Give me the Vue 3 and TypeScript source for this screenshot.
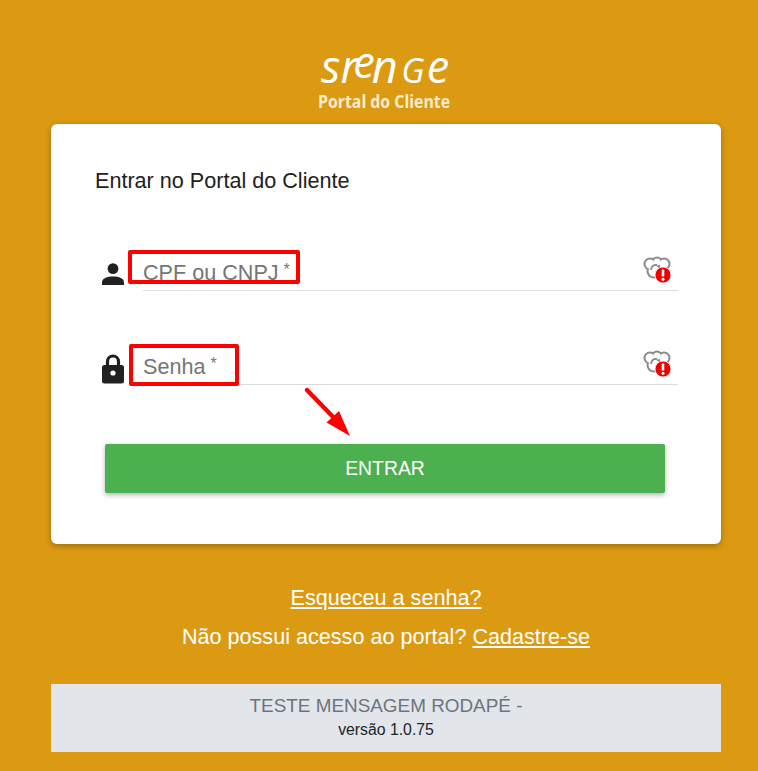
<template>
  <div class="page">
    <div class="logo">
      <svg class="logo-word" viewBox="0 0 140 38" role="img" aria-label="Sienge">
        <g fill="#fff" font-family="'Open Sans', sans-serif" font-style="italic" font-weight="400">
          <text x="5" y="29" font-size="46" transform="scale(0.98 1)">s</text>
          <text x="25" y="29" font-size="46" transform="scale(0.98 1)">r</text>
          <text x="38" y="24" font-size="44" transform="scale(0.98 1)">e</text>
          <text x="57" y="29" font-size="46" transform="scale(0.98 1)">n</text>
          <text x="87" y="29" font-size="35" transform="scale(0.98 1)">G</text>
          <text x="113" y="29" font-size="46" transform="scale(0.98 1)">e</text>
        </g>
      </svg>
      <div class="logo-sub">Portal do Cliente</div>
    </div>

    <div class="card">
      <h1 class="title">Entrar no Portal do Cliente</h1>

      <div v-for="field in fields" :key="field.label" class="field" :class="field.key">
        <svg v-if="field.key === 'user'" class="field-icon" viewBox="0 0 24 24" aria-hidden="true">
          <circle cx="12" cy="6.600" r="5.400" fill="#212121" />
          <path d="M1 23v-2.600C1 16.600 6 14.600 12 14.600s11 2 11 5.800V23z" fill="#212121" />
        </svg>
        <svg v-else class="field-icon" viewBox="0 0 24 30" aria-hidden="true">
          <path d="M6.500 13V7.500a5.500 5.500 0 0 1 11 0V13" fill="none" stroke="#212121" stroke-width="3.200" />
          <rect x="1" y="11" width="22" height="18.500" rx="2.500" fill="#212121" />
          <circle cx="12" cy="19" r="2.600" fill="#fff" />
        </svg>

        <div class="input-line">
          <span class="placeholder">{{ field.label }}</span><span class="req">*</span>
          <svg class="status" viewBox="0 0 30 28" aria-hidden="true">
            <g fill="#8a8a8a">
              <circle cx="7" cy="8" r="6.500" />
              <circle cx="14" cy="6" r="5.500" />
              <circle cx="21" cy="8" r="6.500" />
              <circle cx="11" cy="15" r="7.500" />
            </g>
            <g fill="#fff">
              <circle cx="7" cy="8" r="4.500" />
              <circle cx="14" cy="6" r="3.500" />
              <circle cx="21" cy="8" r="4.500" />
              <circle cx="11" cy="15" r="5.500" />
            </g>
            <path d="M8 14a5 5 0 0 1 6-5" fill="none" stroke="#8a8a8a" stroke-width="1.800" />
            <circle cx="20" cy="19" r="8" fill="#ee0000" stroke="#fff" stroke-width="0.800" />
            <rect x="18.700" y="13.500" width="2.600" height="7" rx="0.600" fill="#fff" />
            <circle cx="20" cy="23.200" r="1.500" fill="#fff" />
          </svg>
        </div>
        <div class="mark"></div>
      </div>

      <div class="action">
        <svg class="arrow" viewBox="0 0 50 52" aria-hidden="true">
          <path d="M3 3 L32 33" stroke="#f00" stroke-width="4.400" stroke-linecap="round" fill="none" />
          <path d="M22.500 35.500 L35 24 L46 49z" fill="#f00" />
        </svg>
        <button class="enter" type="button">ENTRAR</button>
      </div>
    </div>

    <div class="links">
      <a class="link" href="#">Esqueceu a senha?</a>
      <p class="signup">Não possui acesso ao portal? <a class="link" href="#">Cadastre-se</a></p>
    </div>

    <footer class="foot">
      <div class="foot-msg">TESTE MENSAGEM RODAPÉ -</div>
      <div class="foot-ver">versão 1.0.75</div>
    </footer>
  </div>
</template>

<script setup lang="ts">
interface Field {
  key: string;
  label: string;
}

const fields: Field[] = [
  { key: 'user', label: 'CPF ou CNPJ' },
  { key: 'lock', label: 'Senha' },
];
</script>

<style scoped>
.page {
  box-sizing: border-box;
  height: 771px;
  overflow: hidden;
  background: #dc9a13;
  padding: 54px 37px 0 51px;
  font-family: "Liberation Sans", Arial, sans-serif;
}

.logo {
  height: 70px;
  display: flex;
  flex-direction: column;
  align-items: center;
  color: #fff;
}

.logo-word {
  display: block;
  width: 140px;
  height: 38px;
  overflow: visible;
}

.logo-sub {
  margin-top: -1px;
  margin-left: -4px;
  font-family: "Open Sans", sans-serif;
  font-weight: 700;
  font-size: 18px;
  line-height: 20px;
  color: #fbeccd;
  transform: scaleX(0.88);
  white-space: nowrap;
}

.card {
  box-sizing: border-box;
  height: 420px;
  background: #fff;
  border-radius: 6px;
  box-shadow: 0 2px 6px rgba(0, 0, 0, 0.3);
  padding: 44px 43px 0 44px;
}

.title {
  margin: 0 0 47px;
  font-size: 21.6px;
  line-height: 25px;
  font-weight: 400;
  color: #212121;
}

.field {
  position: relative;
  display: flex;
  align-items: flex-end;
  gap: 18px;
  height: 51px;
  margin-bottom: 43px;
  padding-left: 6px;
}

.field-icon {
  flex: none;
  width: 24px;
  height: 24px;
  margin-bottom: 5px;
}

.lock .field-icon {
  height: 30px;
  margin-bottom: 1px;
}

.input-line {
  position: relative;
  flex: 1;
  height: 35px;
  border-bottom: 1px solid #ddd;
  font-size: 21.6px;
  line-height: 35px;
  color: #757575;
}

.lock .input-line {
  margin-left: -1px;
}

.lock .placeholder {
  margin-left: 1px;
}

.req {
  position: relative;
  top: -5px;
  margin-left: 5px;
  font-size: 16px;
}

.status {
  position: absolute;
  right: 5px;
  top: 1px;
  width: 30px;
  height: 28px;
}

.mark {
  position: absolute;
  border: 4px solid #f00;
  border-radius: 2px;
  box-sizing: border-box;
}

.user .mark {
  left: 33px;
  top: 10px;
  width: 172px;
  height: 34px;
}

.lock .mark {
  left: 34px;
  top: 10px;
  width: 110px;
  height: 42px;
}

.action {
  position: relative;
  padding: 0 13px 0 10px;
  margin-top: 59px;
}

.arrow {
  position: absolute;
  left: 209px;
  top: -57px;
  width: 50px;
  height: 52px;
}

.enter {
  display: block;
  width: 100%;
  height: 49px;
  border: none;
  border-radius: 2px;
  background: #4caf50;
  color: #fff;
  font-family: inherit;
  font-size: 19.4px;
  box-shadow: 0 2px 5px rgba(0, 0, 0, 0.3);
}

.links {
  margin-top: 41px;
  text-align: center;
  color: #fff;
  font-size: 21.6px;
  line-height: 26px;
}

.link {
  color: #fff;
  text-decoration: underline;
}

.signup {
  margin: 13px 0 0;
}

.foot {
  box-sizing: border-box;
  height: 68px;
  margin-top: 34px;
  padding-top: 11px;
  background: #e2e6ea;
  text-align: center;
}

.foot-msg {
  font-size: 18.9px;
  line-height: 22px;
  color: #6c757d;
}

.foot-ver {
  margin-top: 3px;
  font-size: 15.8px;
  line-height: 20px;
  color: #212529;
}
</style>

<style>
html, body { background: #dc9a13; }
</style>
